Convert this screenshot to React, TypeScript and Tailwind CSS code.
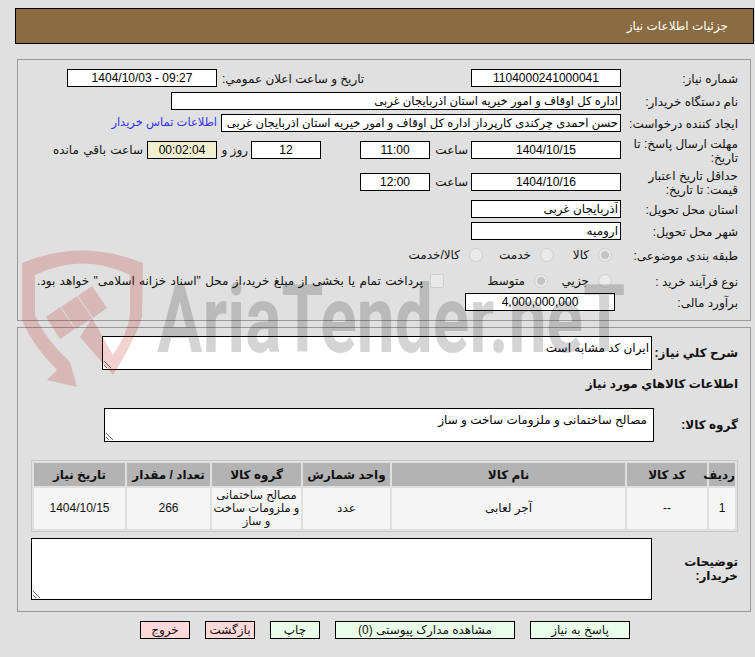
import type { ReactNode } from 'react'

const inputClass = 'h-[18px] border border-black bg-white px-[2px] text-[12px] leading-none text-black outline-none'
const labelClass = 'w-[117px] shrink-0 pt-[2px] text-[12px] leading-[14px] text-[#111]'

function Field({ value, className = '', center = false }: { value: string; className?: string; center?: boolean }) {
    return <input readOnly value={value} className={`${inputClass} ${center ? 'text-center' : 'text-right'} ${className}`} />
}

function Row({ label, className = '', children }: { label: string; className?: string; children?: ReactNode }) {
    return (
        <div className={`flex items-center ${className}`}>
            <div className={labelClass}>{label}</div>
            {children}
        </div>
    )
}

function Radio({ checked = false }: { checked?: boolean }) {
    return (
        <span className="flex h-[14px] w-[14px] shrink-0 items-center justify-center rounded-full border border-[#cfcfcf] bg-[#e9e9e9]">
            {checked && <span className="h-[8px] w-[8px] rounded-full bg-[#c4c4c4]" />}
        </span>
    )
}

function Option({ label, width, checked }: { label: string; width: string; checked?: boolean }) {
    return (
        <div className={`flex items-center gap-[9px] ${width}`}>
            <Radio checked={checked} />
            <span>{label}</span>
        </div>
    )
}

function ActionButton({ label, width, danger }: { label: string; width: string; danger?: boolean }) {
    return (
        <button className={`h-[18px] border border-black text-[12px] leading-none text-[#111] ${width} ${danger ? 'bg-[#ffd9d9]' : 'bg-[#eaffea]'}`}>
            {label}
        </button>
    )
}

const headers = [
    { title: 'ردیف', w: 'w-[26px]' },
    { title: 'کد کالا', w: 'w-[80px]' },
    { title: 'نام کالا', w: 'w-[233px]' },
    { title: 'واحد شمارش', w: 'w-[87px]' },
    { title: 'گروه کالا', w: 'w-[89px]' },
    { title: 'تعداد / مقدار', w: 'w-[83px]' },
    { title: 'تاریخ نیاز', w: 'w-[91px]' },
]

function Watermark() {
    return (
        <div className="pointer-events-none absolute inset-0 overflow-hidden">
            <svg className="absolute left-0 top-0" width="755" height="657" viewBox="0 0 755 657">
                <g fill="#b90000" fillOpacity="0.18">
                    <path d="M22,263 Q82,238 143,263 L142,317 Q136,338 113,375 L80,337 L92,318 L113,355 Q127,335 130,315 L130,275 Q83,252 35,275 L35,315 Q42,332 58,350 L70,362 L77,387 L47,380 L57,370 Q32,345 22,320 Z" />
                    <path d="M46,317 L60,307 L75,329 L60,339 Z" />
                    <path d="M61,307 L77,296 L92,318 L76,329 Z" />
                    <path d="M78,296 L92,286 L107,308 L93,318 Z" />
                </g>
            </svg>
            <div
                dir="ltr"
                className="absolute left-[157px] top-[290px] origin-left scale-x-[0.72] whitespace-nowrap text-[94px] font-bold leading-[60px] text-black/[0.17] [font-family:Roboto,sans-serif]"
            >
                AriaTender.neT
            </div>
        </div>
    )
}

export default function App() {
    return (
        <div dir="rtl" className="relative h-[657px] w-[755px] overflow-hidden bg-[#e0e0e0] text-[12px] text-[#111] [font-family:'Liberation_Sans','DejaVu_Sans',sans-serif]">
            <div className="ml-[15px] mr-px mt-[8px] flex h-[36px] items-center border border-black bg-[#8b6b41] pr-[25px] text-[12px] text-white">
                جزئیات اطلاعات نیاز
            </div>

            <div className="ml-[17px] mr-[4px] mt-[15px] h-[262px] border border-[#999] pr-[12px] pt-[8px]">
                <Row label="شماره نیاز:">
                    <Field value="1104000241000041" center className="w-[150px]" />
                    <div className="w-[254px] pl-[5px] pt-[2px] text-left">تاریخ و ساعت اعلان عمومي:</div>
                    <Field value="09:27 - 1404/10/03" center className="w-[150px]" />
                </Row>
                <Row label="نام دستگاه خریدار:" className="mt-[4px]">
                    <Field value="اداره کل اوقاف و امور خیریه استان اذربایجان غربی" className="w-[450px] !text-[11.6px]" />
                </Row>
                <Row label="ایجاد کننده درخواست:" className="mt-[4px]">
                    <Field value="حسن احمدی چرکندی کارپرداز اداره کل اوقاف و امور خیریه استان اذربایجان غربی" className="w-[400px] !text-[11.6px]" />
                    <span className="mr-[4px] text-[11.5px] text-[#3333ff]">اطلاعات تماس خریدار</span>
                </Row>
                <Row label="مهلت ارسال پاسخ: تا تاریخ:" className="mt-[4px] h-[28px]">
                    <Field value="1404/10/15" center className="w-[150px]" />
                    <span className="w-[41px] pr-[3px]">ساعت</span>
                    <Field value="11:00" center className="w-[70px]" />
                    <Field value="12" center className="mr-[39px] w-[70px]" />
                    <span className="w-[34px] pr-[3px]">روز و</span>
                    <Field value="00:02:04" center className="w-[70px] !bg-[#f0f0d0]" />
                    <span className="mr-[4px] [word-spacing:1px]">ساعت باقي مانده</span>
                </Row>
                <Row label="حداقل تاریخ اعتبار قیمت: تا تاریخ:" className="mt-[4px] h-[28px]">
                    <Field value="1404/10/16" center className="w-[150px]" />
                    <span className="w-[41px] pr-[3px]">ساعت</span>
                    <Field value="12:00" center className="w-[70px]" />
                </Row>
                <Row label="استان محل تحویل:" className="mt-[4px]">
                    <Field value="آذربایجان غربی" className="w-[150px]" />
                </Row>
                <Row label="شهر محل تحویل:" className="mt-[4px]">
                    <Field value="ارومیه" className="w-[150px]" />
                </Row>
                <Row label="طبقه بندی موضوعی:" className="mt-[4px] h-[22px]">
                    <div className="flex items-center pr-[9px]">
                        <Option label="کالا" width="w-[58px]" checked />
                        <Option label="خدمت" width="w-[71px]" />
                        <Option label="کالا/خدمت" width="w-[90px]" />
                    </div>
                </Row>
                <Row label="نوع فرآیند خرید :" className="mt-[4px] h-[22px]">
                    <div className="flex items-center whitespace-nowrap pr-[9px]">
                        <Option label="جزیي" width="w-[64px]" />
                        <Option label="متوسط" width="w-[104px]" checked />
                        <span className="h-[14px] w-[14px] shrink-0 rounded-[2px] border border-[#cfcfcf] bg-[#e9e9e9]" />
                        <span className="mr-[7px] [word-spacing:1px]">پرداخت تمام یا بخشی از مبلغ خرید،از محل "اسناد خزانه اسلامی" خواهد بود.</span>
                    </div>
                </Row>
                <Row label="برآورد مالی:" className="mt-px">
                    <Field value="4,000,000,000" center className="mr-[6px] w-[150px]" />
                </Row>
            </div>

            <div className="ml-[17px] mr-[4px] mt-[6px] h-[285px] border border-[#999] pr-[12px] pt-[8px]">
                <div className="flex items-center">
                    <div className="w-[86px] shrink-0 font-bold">شرح کلي نياز:</div>
                    <textarea readOnly value="ایران کد مشابه است" className="h-[34px] w-[550px] border border-black bg-white px-[2px] pt-[2px] text-[12px] text-black outline-none" />
                </div>
                <div className="mt-[4px] h-[20px] font-bold leading-[20px]">اطلاعات کالاهاي مورد نياز</div>
                <div className="mt-[14px] flex items-center">
                    <div className="w-[84px] shrink-0 font-bold">گروه کالا:</div>
                    <textarea readOnly value="مصالح ساختمانی و ملزومات ساخت و ساز" className="h-[34px] w-[550px] border border-black bg-white px-[6px] pt-[2px] text-[12px] text-black outline-none" />
                </div>
                <table className="mt-[18px] h-[72px] w-[707px] table-fixed border-separate border-spacing-[2px] border border-[#c8c8c8] text-center">
                    <thead>
                        <tr>
                            {headers.map((h) => (
                                <th key={h.title} className={`h-[23px] whitespace-nowrap bg-[#b3b3b3] p-0 text-[12px] font-bold ${h.w}`}>{h.title}</th>
                            ))}
                        </tr>
                    </thead>
                    <tbody>
                        <tr className="[&>td]:bg-[#f5f5f5] [&>td]:p-0 [&>td]:leading-[13px]">
                            <td>1</td>
                            <td>--</td>
                            <td>آجر لعابی</td>
                            <td>عدد</td>
                            <td className="whitespace-nowrap text-[11.5px]">مصالح ساختمانی<br />و ملزومات ساخت<br />و ساز</td>
                            <td>266</td>
                            <td>1404/10/15</td>
                        </tr>
                    </tbody>
                </table>
                <div className="mt-[6px] flex items-center">
                    <div className="w-[86px] shrink-0 font-bold leading-[14px]">توضیحات خریدار:</div>
                    <textarea readOnly className="h-[62px] w-[621px] border border-black bg-white outline-none" />
                </div>
            </div>

            <div className="mt-[9px] flex gap-[15px] pr-[125px]">
                <ActionButton label="پاسخ به نیاز" width="w-[100px]" />
                <ActionButton label="مشاهده مدارک پیوستی (0)" width="w-[180px]" />
                <ActionButton label="چاپ" width="w-[50px]" />
                <ActionButton label="بازگشت" width="w-[50px]" danger />
                <ActionButton label="خروج" width="w-[50px]" danger />
            </div>

            <Watermark />
        </div>
    )
}
